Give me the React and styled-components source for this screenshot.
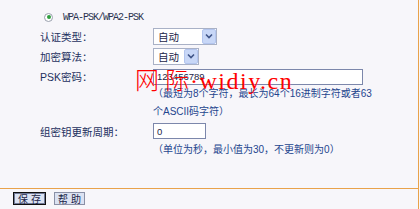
import styled, { createGlobalStyle } from "styled-components";

const GlobalStyle = createGlobalStyle`
  html, body {
    margin: 0;
    padding: 0;
    background: #f7f6fa;
  }
  body {
    font-family: "Liberation Sans", "Noto Sans CJK SC", sans-serif;
  }
`;

const Page = styled.div`
  position: relative;
  width: 418px;
  height: 209px;
  border-right: 1px solid #e9a24a;
  background: #f7f6fa;
  display: flex;
  flex-direction: column;
  overflow: hidden;
`;

const Form = styled.div`
  flex: 1;
  padding: 9px 0 0 40px;
`;

const RadioRow = styled.div`
  display: flex;
  align-items: center;
  height: 16px;
  padding-left: 4px;
  gap: 10px;
`;

const Radio = styled.span`
  width: 9px;
  height: 9px;
  box-sizing: border-box;
  border-radius: 50%;
  border: 1px solid #9aa0ae;
  background: #fff;
  display: flex;
  align-items: center;
  justify-content: center;

  &::after {
    content: "";
    width: 4px;
    height: 4px;
    border-radius: 50%;
    background: #2f9e3e;
  }
`;

const Mono = styled.span`
  font-family: "Liberation Mono", "Noto Sans CJK SC", monospace;
  font-size: 10px;
  letter-spacing: -1px;
  color: #2b3350;
`;

const Row = styled.div`
  display: grid;
  grid-template-columns: 113px 1fr;
  align-items: center;
  height: ${(p) => p.$h || 20}px;
  margin-top: ${(p) => p.$mt || 0}px;
`;

const Label = styled.span`
  font-size: 10.5px;
  color: #1e3160;
  white-space: nowrap;
`;

const Select = styled.div`
  display: flex;
  align-items: center;
  width: ${(p) => p.$w}px;
  height: 17px;
  box-sizing: border-box;
  border: 1px solid #a9b1c6;
  background: #fff;
  padding-left: 4px;
  font-size: 10.5px;
  color: #1b2548;
`;

const Arrow = styled.span`
  margin-left: auto;
  width: 14px;
  height: 15px;
  box-sizing: border-box;
  background: #c8d7f7;
  border: 1px solid #b3c5ee;
  border-radius: 2px;
  display: flex;
  align-items: center;
  justify-content: center;
`;

const TextInput = styled.input`
  width: ${(p) => p.$w}px;
  height: 16px;
  box-sizing: border-box;
  margin: 0;
  border: 1px solid #7c87ab;
  background: #fff;
  padding: 0 0 0 3px;
  font-family: "Liberation Sans", sans-serif;
  font-size: 9.5px;
  color: #1b2548;
  outline: none;
`;

const Hint = styled.div`
  margin-left: 113px;
  width: 222px;
  font-size: 10px;
  line-height: 18px;
  color: #24458e;
`;

const Footer = styled.div`
  height: 21px;
  box-sizing: border-box;
  border-top: 1px solid #e9a24a;
  display: flex;
  align-items: flex-start;
  padding: 3px 0 0 13px;
  gap: 8px;
`;

const Button = styled.button`
  width: ${(p) => p.$w}px;
  height: 13px;
  box-sizing: border-box;
  margin: 0;
  padding: 0;
  background: #dbe2f2;
  border: 1px solid ${(p) => (p.$focus ? "#111" : "#8a90a6")};
  box-shadow: ${(p) => (p.$focus ? "inset 0 0 0 1px #6f7896" : "none")};
  font-family: "Noto Sans CJK SC", sans-serif;
  font-size: 10px;
  line-height: 11px;
  color: #1b2548;
  letter-spacing: 3px;
  text-indent: 3px;
`;

const Watermark = styled.div`
  position: absolute;
  left: 135px;
  top: 65px;
  display: flex;
  align-items: baseline;
  color: #ff0000;
  font-size: 24px;
  line-height: 28px;
  white-space: nowrap;
  pointer-events: none;
`;

const WaterCjk = styled.span`
  display: inline-block;
  width: ${(p) => p.$w}px;
  font-family: "Noto Sans CJK SC", sans-serif;
  font-weight: 300;
`;

const WaterLatin = styled.span`
  font-family: "Liberation Serif", serif;
  letter-spacing: 1.5px;
`;

function Chevron() {
  return (
    <svg width="8" height="6" viewBox="0 0 8 6">
      <path d="M1 1.5 L4 4.5 L7 1.5" fill="none" stroke="#3f5487" strokeWidth="1.6" />
    </svg>
  );
}

function FakeSelect({ width, value }) {
  return (
    <Select $w={width}>
      {value}
      <Arrow>
        <Chevron />
      </Arrow>
    </Select>
  );
}

export default function App() {
  return (
    <Page>
      <GlobalStyle />
      <Form>
        <RadioRow>
          <Radio />
          <Mono>WPA-PSK/WPA2-PSK</Mono>
        </RadioRow>
        <Row $mt={1}>
          <Label>认证类型：</Label>
          <FakeSelect width={64} value="自动" />
        </Row>
        <Row>
          <Label>加密算法：</Label>
          <FakeSelect width={46} value="自动" />
        </Row>
        <Row $h={17} $mt={2}>
          <Label>PSK密码：</Label>
          <TextInput $w={210} readOnly defaultValue="123456789" />
        </Row>
        <Hint>（最短为8个字符，最长为64个16进制字符或者63个ASCII码字符）</Hint>
        <Row>
          <Label>组密钥更新周期：</Label>
          <TextInput $w={53} readOnly defaultValue="0" />
        </Row>
        <Hint>（单位为秒，最小值为30，不更新则为0）</Hint>
      </Form>
      <Footer>
        <Button $w={33} $focus>
          保存
        </Button>
        <Button $w={31}>帮助</Button>
      </Footer>
      <Watermark>
        <WaterCjk $w={30}>网</WaterCjk>
        <WaterCjk $w={25}>际</WaterCjk>
        <WaterLatin>·widiy.cn</WaterLatin>
      </Watermark>
    </Page>
  );
}
